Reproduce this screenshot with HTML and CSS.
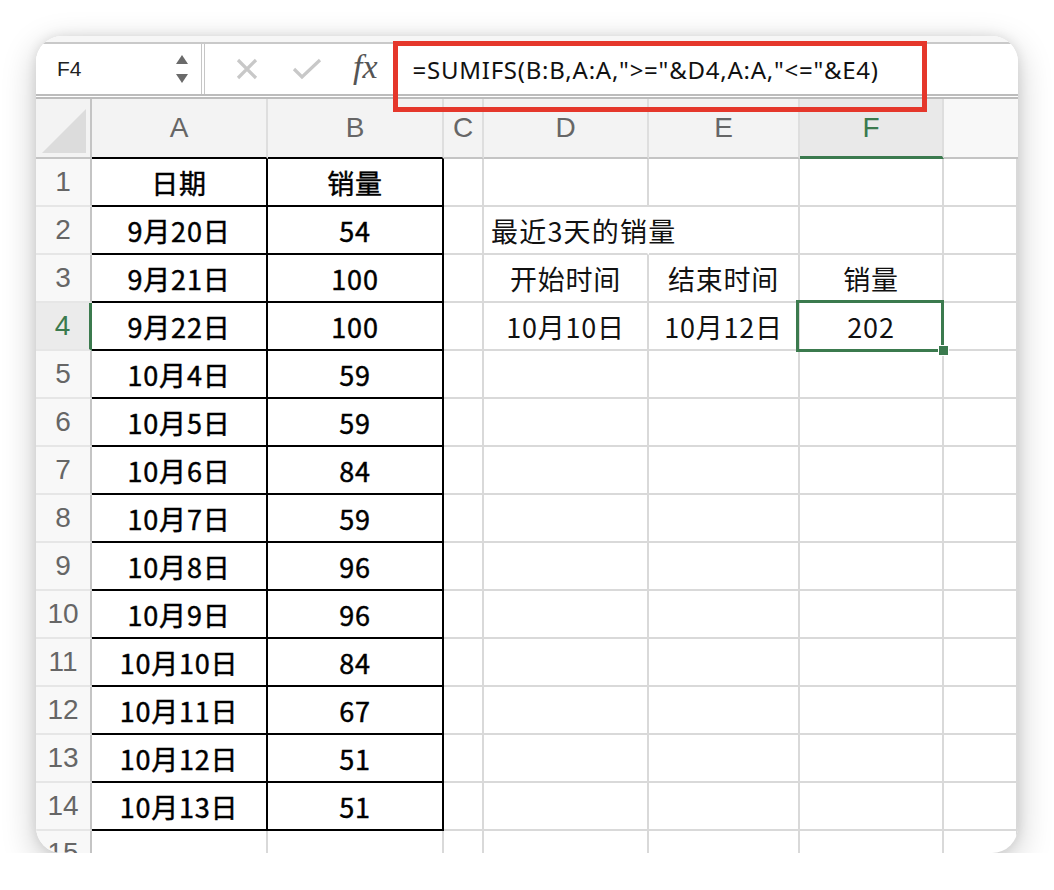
FILE: index.html
```html
<!DOCTYPE html>
<html lang="zh-CN">
<head>
<meta charset="utf-8">
<title>SUMIFS</title>
<link rel="stylesheet" href="styles.css">
</head>
<body>
<div class="window">
  <div class="topstrip"></div>
  <div class="fbar">
    <div class="namebox">
      <span class="nb-text">F4</span>
      <svg class="nb-arrows" width="14" height="30" viewBox="0 0 14 30">
        <polygon points="7,1 13,10 1,10" fill="#6a6a6a"/>
        <polygon points="1,20 13,20 7,29" fill="#6a6a6a"/>
      </svg>
    </div>
    <div class="fb-icons">
      <svg class="ic-x" width="22" height="22" viewBox="0 0 22 22">
        <path d="M2 2 L20 20 M20 2 L2 20" stroke="#c8c8c8" stroke-width="3.2" fill="none"/>
      </svg>
      <svg class="ic-check" width="30" height="22" viewBox="0 0 30 22">
        <path d="M2 11 L10 19 L28 2" stroke="#c8c8c8" stroke-width="3.2" fill="none"/>
      </svg>
      <span class="ic-fx">fx</span>
    </div>
    <div class="fb-input">=SUMIFS(B:B,A:A,"&gt;="&amp;D4,A:A,"&lt;="&amp;E4)</div>
    <div class="redbox"></div>
  </div>
  <div class="sheet">
    <div class="hd corner"><svg width="44" height="44" viewBox="0 0 44 44"><polygon points="0,44 44,44 44,0" fill="#dcdcdc"/></svg></div>
    <div class="hd col">A</div>
    <div class="hd col">B</div>
    <div class="hd col">C</div>
    <div class="hd col">D</div>
    <div class="hd col">E</div>
    <div class="hd col sel">F</div>
    <div class="hd col last"></div>

    <div class="rh">1</div><div class="c t bold">日期</div><div class="c t bold">销量</div><div class="c"></div><div class="c"></div><div class="c"></div><div class="c"></div><div class="c"></div>
    <div class="rh">2</div><div class="c t bold">9月20日</div><div class="c t bold">54</div><div class="c"></div><div class="c over">最近3天的销量</div><div class="c"></div><div class="c"></div><div class="c"></div>
    <div class="rh">3</div><div class="c t bold">9月21日</div><div class="c t bold">100</div><div class="c"></div><div class="c">开始时间</div><div class="c">结束时间</div><div class="c">销量</div><div class="c"></div>
    <div class="rh sel">4</div><div class="c t bold">9月22日</div><div class="c t bold">100</div><div class="c"></div><div class="c">10月10日</div><div class="c">10月12日</div><div class="c active">202<span class="selbox"></span><span class="handle"></span></div><div class="c"></div>
    <div class="rh">5</div><div class="c t bold">10月4日</div><div class="c t bold">59</div><div class="c"></div><div class="c"></div><div class="c"></div><div class="c"></div><div class="c"></div>
    <div class="rh">6</div><div class="c t bold">10月5日</div><div class="c t bold">59</div><div class="c"></div><div class="c"></div><div class="c"></div><div class="c"></div><div class="c"></div>
    <div class="rh">7</div><div class="c t bold">10月6日</div><div class="c t bold">84</div><div class="c"></div><div class="c"></div><div class="c"></div><div class="c"></div><div class="c"></div>
    <div class="rh">8</div><div class="c t bold">10月7日</div><div class="c t bold">59</div><div class="c"></div><div class="c"></div><div class="c"></div><div class="c"></div><div class="c"></div>
    <div class="rh">9</div><div class="c t bold">10月8日</div><div class="c t bold">96</div><div class="c"></div><div class="c"></div><div class="c"></div><div class="c"></div><div class="c"></div>
    <div class="rh">10</div><div class="c t bold">10月9日</div><div class="c t bold">96</div><div class="c"></div><div class="c"></div><div class="c"></div><div class="c"></div><div class="c"></div>
    <div class="rh">11</div><div class="c t bold">10月10日</div><div class="c t bold">84</div><div class="c"></div><div class="c"></div><div class="c"></div><div class="c"></div><div class="c"></div>
    <div class="rh">12</div><div class="c t bold">10月11日</div><div class="c t bold">67</div><div class="c"></div><div class="c"></div><div class="c"></div><div class="c"></div><div class="c"></div>
    <div class="rh">13</div><div class="c t bold">10月12日</div><div class="c t bold">51</div><div class="c"></div><div class="c"></div><div class="c"></div><div class="c"></div><div class="c"></div>
    <div class="rh">14</div><div class="c t bold">10月13日</div><div class="c t bold">51</div><div class="c"></div><div class="c"></div><div class="c"></div><div class="c"></div><div class="c"></div>
    <div class="rh last-row">15</div><div class="c"></div><div class="c"></div><div class="c"></div><div class="c"></div><div class="c"></div><div class="c"></div><div class="c"></div>
  </div>
</div>
</body>
</html>
```
FILE: styles.css
```css
html, body {
  margin: 0;
  padding: 0;
  background: #ffffff;
}
body {
  font-family: "Noto Sans CJK SC", "Noto Sans", sans-serif;
}
.window {
  margin: 36px 0 0 36px;
  width: 982px;
  height: 817px;
  border-radius: 26px;
  overflow: hidden;
  background: #ffffff;
  box-shadow: 0 10px 34px rgba(0, 0, 0, 0.22), 0 0 12px rgba(0, 0, 0, 0.10);
  display: flex;
  flex-direction: column;
}
.topstrip {
  height: 6px;
  background: #f6f6f6;
  border-bottom: 2px solid #c9c9c9;
  flex: none;
}
.fbar {
  position: relative;
  height: 50px;
  flex: none;
  display: flex;
  align-items: center;
  border-bottom: 5px double #bcbcbc;
  background: #ffffff;
}
.namebox {
  width: 169px;
  height: 100%;
  box-sizing: border-box;
  border-right: 4px double #c6c6c6;
  display: flex;
  align-items: center;
  justify-content: space-between;
  padding: 0 12px 0 21px;
  background: #ffffff;
}
.nb-text {
  font-family: "Liberation Sans", "Noto Sans", sans-serif;
  font-size: 21px;
  color: #222;
}
.nb-arrows {
  display: block;
}
.fb-icons {
  display: flex;
  align-items: center;
  height: 100%;
  padding-left: 31px;
}
.ic-x { display: block; }
.ic-check { display: block; margin-left: 34px; }
.ic-fx {
  font-family: "Liberation Serif", "DejaVu Serif", serif;
  font-style: italic;
  font-size: 34px;
  color: #555;
  margin-left: 31px;
  line-height: 1;
  position: relative;
  top: -2px;
}
.fb-input {
  margin-left: 35px;
  font-family: "Noto Sans", "Noto Sans CJK SC", sans-serif;
  font-size: 24px;
  letter-spacing: 0.75px;
  color: #111;
  white-space: nowrap;
}
.redbox {
  position: absolute;
  left: 357px;
  top: -3px;
  width: 534px;
  height: 71px;
  box-sizing: border-box;
  border: 5px solid #e5372b;
}
.sheet {
  flex: 1;
  display: grid;
  grid-template-columns: 56px 176px 176px 40px 165px 151px 144px 1fr;
  grid-template-rows: 60px repeat(15, 48px);
  overflow: hidden;
}
.hd {
  background: #f3f3f3;
  box-sizing: border-box;
  border-right: 2px solid #dedede;
  border-bottom: 2px solid #c4c4c4;
  display: flex;
  align-items: center;
  justify-content: center;
  font-family: "Liberation Sans", "Noto Sans", sans-serif;
  font-size: 28px;
  color: #666;
}
.hd.corner {
  border-right: 2px solid #c4c4c4;
  align-items: flex-end;
  justify-content: flex-end;
  padding: 0 4px 4px 0;
}
.hd.corner svg { display: block; }
.hd.col:nth-child(2), .hd.col:nth-child(3) {
  border-bottom-color: #000;
}
.hd.sel {
  background: #e9e9e9;
  color: #3b7a4e;
  border-bottom: 3px solid #3b7a4e;
}
.hd.last {
  background: #f8f8f8;
  border-right: none;
}
.rh {
  background: #f8f8f8;
  box-sizing: border-box;
  border-right: 2px solid #c4c4c4;
  border-bottom: 2px solid #e6e6e6;
  display: flex;
  align-items: center;
  justify-content: center;
  font-family: "Liberation Sans", "Noto Sans", sans-serif;
  font-size: 28px;
  color: #666;
  padding-bottom: 1px;
}
.rh.sel {
  background: #ebebeb;
  color: #3b7a4e;
  border-right: 3px solid #3b7a4e;
}
.rh.last-row {
  align-items: flex-start;
  padding-top: 6px;
}
.c {
  position: relative;
  box-sizing: border-box;
  border-right: 2px solid #d9d9d9;
  border-bottom: 2px solid #d9d9d9;
  display: flex;
  align-items: center;
  justify-content: center;
  font-size: 27px;
  letter-spacing: 0.8px;
  color: #111;
  white-space: nowrap;
}
.c.t {
  border-right-color: #000;
  border-bottom-color: #000;
}
.bold {
  font-weight: 400;
  color: #000;
  -webkit-text-stroke: 0.45px #000;
}
.c.over {
  justify-content: flex-start;
  padding-left: 7px;
  border-right-color: transparent;
  overflow: visible;
  z-index: 1;
  letter-spacing: 1.2px;
}
.c.active {
  z-index: 3;
}
.selbox {
  position: absolute;
  left: -4px;
  top: -3px;
  right: -2px;
  bottom: -3px;
  border: 3px solid #3b7a4e;
  pointer-events: none;
}
.handle {
  position: absolute;
  right: -7px;
  bottom: -7px;
  width: 9px;
  height: 9px;
  background: #3b7a4e;
  border: 1px solid #fff;
}
```
